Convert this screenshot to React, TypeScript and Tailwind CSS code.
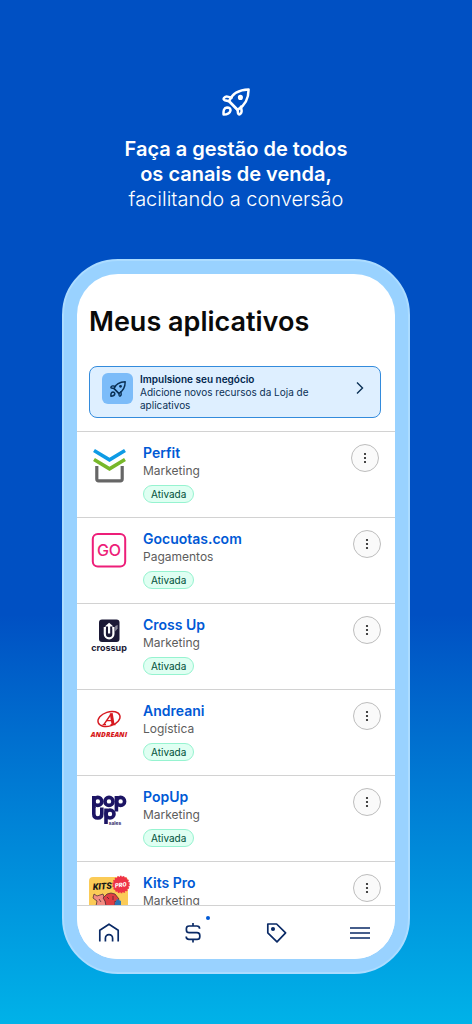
import type { ReactNode } from 'react';
import { clsx } from 'clsx';

type AppItem = {
	name: string;
	category: string;
	logo: ReactNode;
};

function RocketIcon({ className }: { className?: string }) {
	return (
		<svg
			viewBox="0 0 28 28"
			className={className}
			fill="none"
			stroke="currentColor"
			strokeWidth="2.5"
			strokeLinecap="round"
			strokeLinejoin="round"
			aria-hidden="true"
		>
			<path d="M7 13.2C10 6 16.5 1.6 26.6 1.4 26.6 11.4 22.4 17.8 15.6 21.8Z" />
			<path d="M9.6 9.6 5.4 8.6Q3.6 8.2 2.2 9.8 .8 11.6 2.8 12.2L7 13.2 15.6 21.8 16 25.2Q16.6 27.2 18.2 26 19.8 24.6 19.6 22.8L19 18.8" />
			<path d="M1.6 26.6C1.2 22.8 2 19.6 5 19.4 7.6 19.4 8.8 21 8.4 22.8 7.8 25.4 5.2 26.6 1.6 26.6Z" />
			<circle cx="18.4" cy="9.4" r="1.3" fill="currentColor" />
		</svg>
	);
}

function PerfitLogo() {
	return (
		<svg viewBox="0 0 40 40" className="size-10" fill="none" aria-hidden="true">
			<path d="M7.8 22V35Q7.8 36.8 9.6 36.8H31.4Q33.2 36.8 33.2 35V22" stroke="#666" strokeWidth="3.2" />
			<path d="M5 15 20.5 25 36 15" stroke="#fff" strokeWidth="6" />
			<path d="M5 15.5 20.5 24.9 36 15.5" stroke="#78b82a" strokeWidth="3.6" />
			<path d="M5 6.5 20.5 15.9 36 6.5" stroke="#0e9be5" strokeWidth="3.6" />
		</svg>
	);
}

function GocuotasLogo() {
	return (
		<svg viewBox="0 0 40 40" className="size-10" aria-hidden="true">
			<rect x="3.8" y="4" width="32.4" height="32.4" rx="5" fill="#fff" stroke="#ed1e79" strokeWidth="2" />
			<text
				x="20"
				y="26"
				textAnchor="middle"
				fill="#ed1e79"
				className="font-['Inter',sans-serif] text-[16px] font-medium"
			>
				GO
			</text>
		</svg>
	);
}

function CrossUpLogo() {
	return (
		<svg viewBox="0 0 40 40" className="size-10 overflow-visible" aria-hidden="true">
			<rect x="10" y="3.5" width="20.5" height="22.5" rx="3" fill="#1b1936" />
			<path
				d="M17 12H15.8V18A4.3 4.3 0 0 0 24.4 18V12H23.2M20.1 17.5V8.5"
				fill="none"
				stroke="#fff"
				strokeWidth="2.2"
			/>
			<path d="M15.8 10.5 20.1 6.7 24.4 10.5Z" fill="#fff" />
			<path d="M26.2 10 28.6 9V12.5L26.2 15.5Z" fill="#8b8a9b" />
			<text
				x="20"
				y="35"
				textAnchor="middle"
				fill="#1b1936"
				className="font-['Inter',sans-serif] text-[9px] font-bold"
			>
				crossup
			</text>
		</svg>
	);
}

function AndreaniLogo() {
	return (
		<svg viewBox="0 0 40 40" className="size-10 overflow-visible" aria-hidden="true">
			<g fill="none" stroke="#d71920">
				<ellipse cx="20" cy="17" rx="11.4" ry="7" strokeWidth="1.4" transform="rotate(-18 20 17)" />
				<path d="M14.8 22.6 22.4 11.6" strokeWidth="1.5" />
				<path d="M22.2 11.3 24 22.2" strokeWidth="3" />
				<path d="M13.6 22.6H17M21.5 22.6H26.5M17.5 18.6H23" strokeWidth="1.2" />
			</g>
			<text
				x="20"
				y="35"
				textAnchor="middle"
				fill="#d71920"
				className="font-['Open_Sans',sans-serif] text-[7px] font-extrabold italic"
			>
				ANDREANI
			</text>
		</svg>
	);
}

function PopUpLogo() {
	return (
		<svg viewBox="0 0 40 40" className="size-10 overflow-visible" aria-hidden="true">
			<g fill="none" stroke="#1c1464" strokeWidth="3.6">
				<path d="M4.8 8V20" />
				<circle cx="8.8" cy="13.4" r="4" />
				<circle cx="20" cy="13.4" r="4" />
				<path d="M27.4 8V23.5" />
				<circle cx="31.6" cy="13.4" r="4" />
				<path d="M4.8 19V26Q4.8 30 8.8 30T12.8 26V19.5" />
				<path d="M17 20.5V36" />
				<circle cx="21" cy="26" r="4" />
			</g>
			<text
				x="26"
				y="37"
				textAnchor="middle"
				fill="#1c1464"
				className="font-['Inter',sans-serif] text-[5px] font-semibold"
			>
				sales
			</text>
		</svg>
	);
}

function KitsProLogo() {
	return (
		<svg viewBox="0 0 40 40" className="size-10 overflow-visible" aria-hidden="true">
			<rect width="39" height="40" y="3" rx="4" fill="#fbcb57" />
			<path d="M4 24 5 20 8 22 11 21 14 20 18 32H7L8 27Z" fill="#f28c82" stroke="#3c2430" strokeWidth=".7" />
			<path d="M14 24 18 20 22 19 26 20 30 25 28 29 26 27V32H17L16 27Z" fill="#df3f43" stroke="#3c2430" strokeWidth=".7" />
			<path d="M26 29 28 25 32 27V35H25Z" fill="#2d75b6" />
			<path d="M10 25 12 28M18 23 20 25M24 22V26" stroke="#3c2430" strokeWidth=".7" />
			<text
				x="4"
				y="16"
				fill="#171717"
				className="font-['Roboto',sans-serif] text-[9px] font-black italic"
				transform="rotate(-4 4 16)"
			>
				KITS
			</text>
			<circle cx="32" cy="10.5" r="8" fill="#ee3347" />
			<circle cx="32" cy="10.5" r="8" fill="none" stroke="#ee3347" strokeWidth="1.6" strokeDasharray="1.6 1.2" />
			<text
				x="32"
				y="13"
				textAnchor="middle"
				fill="#fff"
				className="font-['Roboto',sans-serif] text-[6px] font-black italic"
				transform="rotate(-8 32 13)"
			>
				PRO
			</text>
		</svg>
	);
}

const apps: AppItem[] = [
	{ name: 'Perfit', category: 'Marketing', logo: <PerfitLogo /> },
	{ name: 'Gocuotas.com', category: 'Pagamentos', logo: <GocuotasLogo /> },
	{ name: 'Cross Up', category: 'Marketing', logo: <CrossUpLogo /> },
	{ name: 'Andreani', category: 'Logística', logo: <AndreaniLogo /> },
	{ name: 'PopUp', category: 'Marketing', logo: <PopUpLogo /> },
	{ name: 'Kits Pro', category: 'Marketing', logo: <KitsProLogo /> },
];

function AppRow({ app, first }: { app: AppItem; first: boolean }) {
	return (
		<li
			className={clsx(
				'flex items-start border-t border-[#d2d2d2] pt-3 pb-3.5 pl-3',
				first ? 'pr-4' : 'pr-3.5'
			)}
		>
			<div className="size-10 shrink-0">{app.logo}</div>
			<div className="ml-3.5 min-w-0 flex-1">
				<a href="#" className="block text-sm leading-[18px] font-semibold text-[#0059d5]">
					{app.name}
				</a>
				<p className="text-xs leading-[17px] text-[#5d5d5d]">{app.category}</p>
				<span className="mt-1.5 flex h-[18px] w-fit items-center rounded-full border border-[#96f3d0] bg-[#dffff2] px-[7px] text-[10px] leading-4 text-[#00503a]">
					Ativada
				</span>
			</div>
			<button
				type="button"
				aria-label={`Opções de ${app.name}`}
				className="flex size-7 shrink-0 items-center justify-center rounded-full border border-[#bdbdbd] bg-[#fafafa]"
			>
				<svg viewBox="0 0 12 12" className="size-3" fill="#1a1a1a" aria-hidden="true">
					<circle cx="6" cy="2" r="1.1" />
					<circle cx="6" cy="6" r="1.1" />
					<circle cx="6" cy="10" r="1.1" />
				</svg>
			</button>
		</li>
	);
}

function NavButton({ label, children }: { label: string; children: ReactNode }) {
	return (
		<button type="button" aria-label={label} className="relative text-[#0a2a66]">
			<svg
				viewBox="0 0 22 22"
				className="size-[22px]"
				fill="none"
				stroke="currentColor"
				strokeWidth="1.7"
				strokeLinejoin="round"
				aria-hidden="true"
			>
				{children}
			</svg>
			{label === 'Vendas' && (
				<span className="absolute -top-1.5 -right-1.5 size-1 rounded-full bg-[#0059d5]" />
			)}
		</button>
	);
}

function BottomNav() {
	return (
		<nav className="flex h-[54px] items-center justify-between border-t border-[#d2d2d2] bg-white pr-6 pl-[21px]">
			<NavButton label="Início">
				<path d="M1.8 19.6V8.2L11 2.2 20.2 8.2V19.6M7.4 19.6V16.2A3.6 3.6 0 0 1 14.6 16.2V19.6" />
			</NavButton>
			<NavButton label="Vendas">
				<path d="M11 1V4M11 17.4V20.6M17.6 6.8Q17.6 4 14.8 4H7.2Q4.4 4 4.4 6.6V8Q4.4 10.7 7.2 10.7H15Q17.8 10.7 17.8 13.4V14.7Q17.8 17.4 15 17.4H7Q4.2 17.4 4.2 14.4" />
			</NavButton>
			<NavButton label="Produtos">
				<path d="M2.8 2H11.6L20.6 10.8 12 19.8 2.8 10.8Z" />
				<circle cx="8" cy="7" r="1.2" fill="currentColor" />
			</NavButton>
			<NavButton label="Menu">
				<path d="M1 6H21M1 11H21M1 16H21" />
			</NavButton>
		</nav>
	);
}

export default function App() {
	return (
		<main className="min-h-screen bg-linear-to-b from-[#0050c3] from-60% to-[#00b2e8] px-[62px] pt-[88px] pb-[49px] font-['Inter',sans-serif]">
			<header className="flex flex-col items-center text-white">
				<RocketIcon className="size-7" />
				<h2 className="mt-[21px] text-center text-xl leading-[25px] font-semibold whitespace-nowrap">
					Faça a gestão de todos
					<br />
					os canais de venda,
					<br />
					<span className="font-light">facilitando a conversão</span>
				</h2>
			</header>

			<section className="mt-[47px] rounded-[56px] border-2 border-[#acdcff] bg-[#99d2ff] p-[13px]">
				<div className="overflow-hidden rounded-[41px] bg-white">
					<h1 className="px-3 pt-8 text-[27px] leading-8 font-semibold whitespace-nowrap text-[#0a0a0a]">
						Meus aplicativos
					</h1>

					<a
						href="#"
						className="mt-7 mr-3.5 ml-3 flex items-start rounded-lg border border-[#338bdc] bg-[#deefff] pt-1.5 pr-3 pb-[5px] pl-3 text-[#0a3055]"
					>
						<span className="flex size-[31px] shrink-0 items-center justify-center rounded-md bg-[#7cbcf9]">
							<RocketIcon className="size-4" />
						</span>
						<span className="ml-[7px] flex-1 text-[10px] leading-[13px]">
							<strong className="block font-semibold text-[#00264d]">Impulsione seu negócio</strong>
							<span className="block max-w-[190px]">
								Adicione novos recursos da Loja de aplicativos
							</span>
						</span>
						<svg
							viewBox="0 0 16 16"
							className="mt-[7px] size-4"
							fill="none"
							stroke="currentColor"
							strokeWidth="1.4"
							aria-hidden="true"
						>
							<path d="M5 2.5 10.5 8 5 13.5" />
						</svg>
					</a>

					<ul className="mt-[13px] max-h-[474px] overflow-y-auto [scrollbar-width:none]">
						{apps.map((app, index) => (
							<AppRow key={app.name} app={app} first={index === 0} />
						))}
					</ul>

					<BottomNav />
				</div>
			</section>
		</main>
	);
}
